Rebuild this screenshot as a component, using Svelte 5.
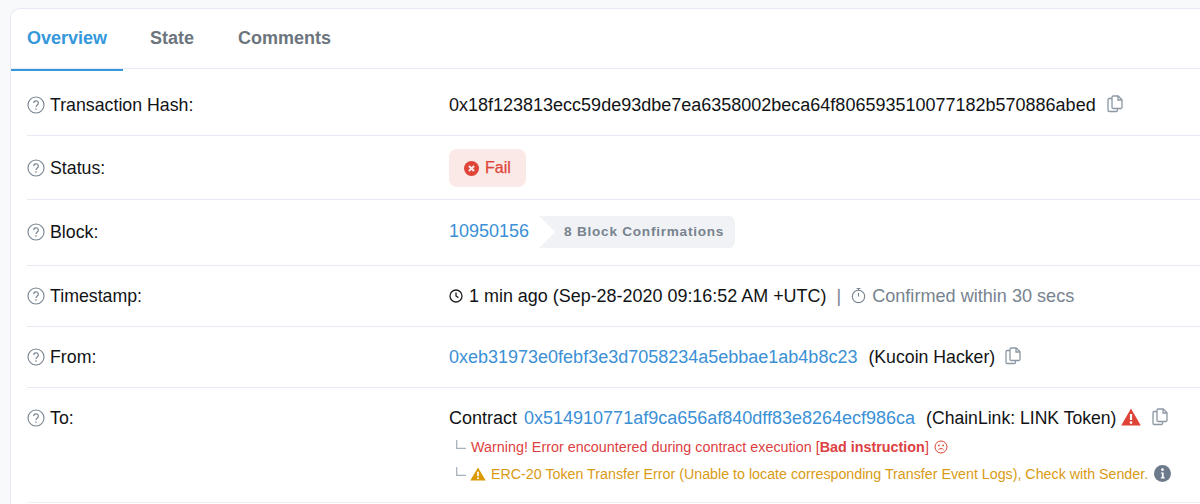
<script>
</script>

{#snippet help()}
  <svg class="help" viewBox="0 0 18 18" width="18" height="18" fill="none" stroke="#77838f">
    <circle cx="9" cy="9" r="8" stroke-width="1.1" />
    <path d="M6.7 7.1a2.3 2.3 0 1 1 3.6 1.9c-.9.6-1.3 1-1.3 2" stroke-width="1.2" />
    <circle cx="9" cy="13" r=".8" fill="#77838f" stroke="none" />
  </svg>
{/snippet}

{#snippet copy()}
  <svg class="copy" viewBox="0 0 16 18" width="16" height="18" fill="none" stroke="#8c98a4" stroke-width="1.3">
    <path d="M5 3.5H2.2a1.2 1.2 0 0 0-1.2 1.2v10.6a1.2 1.2 0 0 0 1.2 1.2h7.1a1.2 1.2 0 0 0 1.2-1.2V13.5" />
    <path d="M5 2.2A1.2 1.2 0 0 1 6.2 1h5l3.8 3.8v7.5a1.2 1.2 0 0 1-1.2 1.2H6.2A1.2 1.2 0 0 1 5 12.3z" />
    <path d="M11 1v4h4" />
  </svg>
{/snippet}

{#snippet elbow()}
  <svg class="elbow" viewBox="0 0 10 10" width="10" height="10" fill="none" stroke="#a9b2bc" stroke-width="1.3">
    <path d="M.7 0v8.3H10" />
  </svg>
{/snippet}

<div class="card">
  <div class="tabs">
    <div class="tab active">Overview</div>
    <div class="tab">State</div>
    <div class="tab">Comments</div>
  </div>

  <div class="rows">
    <div class="row r-hash">
      <div class="label">{@render help()}Transaction Hash:</div>
      <div class="value">
        <span>0x18f123813ecc59de93dbe7ea6358002beca64f806593510077182b570886abed</span>
        {@render copy()}
      </div>
    </div>

    <div class="row r-status">
      <div class="label">{@render help()}Status:</div>
      <div class="value">
        <span class="fail">
          <svg viewBox="0 0 14 14" width="15" height="15">
            <circle cx="7" cy="7" r="7" fill="#de4437" />
            <path d="M4.6 4.6l4.8 4.8M9.4 4.6l-4.8 4.8" stroke="#fbe6e4" stroke-width="2" />
          </svg>
          Fail
        </span>
      </div>
    </div>

    <div class="row r-block">
      <div class="label">{@render help()}Block:</div>
      <div class="value">
        <a href="#block">10950156</a>
        <span class="confirm">8 Block Confirmations</span>
      </div>
    </div>

    <div class="row r-time">
      <div class="label">{@render help()}Timestamp:</div>
      <div class="value">
        <svg class="clock" viewBox="0 0 14 14" width="14" height="14" fill="none" stroke="#1e2022" stroke-width="1.3">
          <circle cx="7" cy="7" r="6" />
          <path d="M7 3.5V7l2.4 1.6" />
        </svg>
        <span class="stamp">1 min ago (Sep-28-2020 09:16:52 AM +UTC)</span>
        <span class="pipe">|</span>
        <svg class="timer" viewBox="0 0 16 18" width="15" height="17" fill="none" stroke="#77838f" stroke-width="1.2">
          <circle cx="8" cy="10" r="6.6" />
          <path d="M8 10V6M6 1.5h4M8 1.5v2" />
        </svg>
        <span class="muted">Confirmed within 30 secs</span>
      </div>
    </div>

    <div class="row r-from">
      <div class="label">{@render help()}From:</div>
      <div class="value">
        <a href="#from">0xeb31973e0febf3e3d7058234a5ebbae1ab4b8c23</a>
        <span class="tag">(Kucoin Hacker)</span>
        {@render copy()}
      </div>
    </div>

    <div class="row r-to">
      <div class="label">{@render help()}To:</div>
      <div class="value stack">
        <div class="line">
          <span>Contract</span>
          <a href="#to">0x514910771af9ca656af840dff83e8264ecf986ca</a>
          <span class="tag">(ChainLink: LINK Token)</span>
          <svg class="alert" viewBox="0 0 20 18" width="20" height="18">
            <path d="M10 .5L19.8 17.5H.2z" fill="#de4437" />
            <path d="M10 6v6" stroke="#fff" stroke-width="2.2" />
            <circle cx="10" cy="14.6" r="1.3" fill="#fff" />
          </svg>
          {@render copy()}
        </div>
        <div class="note red">
          {@render elbow()}
          <span>Warning! Error encountered during contract execution [<b>Bad instruction</b>]</span>
          <svg viewBox="0 0 14 14" width="14" height="14" fill="none" stroke="#de4437" stroke-width="1">
            <circle cx="7" cy="7" r="6" />
            <circle cx="4.9" cy="5.4" r=".9" fill="#de4437" stroke="none" />
            <circle cx="9.1" cy="5.4" r=".9" fill="#de4437" stroke="none" />
            <path d="M4.3 10a3.2 3.2 0 0 1 5.4 0" />
          </svg>
        </div>
        <div class="note amber">
          {@render elbow()}
          <svg viewBox="0 0 17 15" width="16" height="14">
            <path d="M8.5 .5L16.8 14.5H.2z" fill="#db9a04" />
            <path d="M8.5 5v5" stroke="#fff" stroke-width="1.8" />
            <circle cx="8.5" cy="12" r="1.1" fill="#fff" />
          </svg>
          <span>ERC-20 Token Transfer Error (Unable to locate corresponding Transfer Event Logs), Check with Sender.</span>
          <svg class="info" viewBox="0 0 16 16" width="17" height="17">
            <circle cx="8" cy="8" r="8" fill="#6c7a8c" />
            <circle cx="8" cy="4.4" r="1.3" fill="#fff" />
            <path d="M6.5 7h2.6v4.6h1v1.1H6.4v-1.1h1V8.1h-.9z" fill="#fff" />
          </svg>
        </div>
      </div>
    </div>
  </div>
</div>

<style>
  :global(body) {
    margin: 0;
    background: #f8f9fa;
    font-family: "Liberation Sans", Arial, sans-serif;
    color: #111315;
    overflow: hidden;
  }
  .card {
    margin: 8px 0 0 10px;
    background: #fff;
    border: 1px solid #e7eaf3;
    border-right: none;
    border-bottom: none;
    border-radius: 10px 0 0 0;
    height: 496px;
    box-sizing: border-box;
    font-size: 18px;
  }
  .tabs {
    display: flex;
    height: 60px;
    box-sizing: border-box;
    border-bottom: 1px solid #e7eaf3;
  }
  .tab {
    padding: 19px 16px 0;
    margin-right: 12px;
    font-weight: 700;
    font-size: 18px;
    color: #6c757e;
    height: 41px;
  }
  .tab.active {
    color: #3498db;
    border-bottom: 2px solid #3498db;
    margin-bottom: -1px;
    margin-right: 11px;
  }
  .rows {
    padding: 0 0 0 16px;
  }
  .row {
    display: flex;
    border-bottom: 1px solid #e7eaf3;
    box-sizing: border-box;
  }
  .r-hash { height: 67px; padding-top: 26px; }
  .r-status { height: 64px; padding-top: 13px; }
  .r-block { height: 66px; padding-top: 16px; }
  .r-time { height: 61px; padding-top: 20px; }
  .r-from { height: 61px; padding-top: 20px; }
  .r-to { height: 115px; padding-top: 20px; border-bottom-color: #f0f1f4; }
  .label {
    width: 422px;
    flex: none;
    display: flex;
    align-items: flex-start;
    gap: 5px;
    line-height: 20px;
    font-size: 17.75px;
  }
  .r-status .label { padding-top: 9px; }
  .r-block .label { padding-top: 6px; }
  .help {
    margin-top: 1px;
    flex: none;
  }
  .value {
    display: flex;
    align-items: flex-start;
    line-height: 20px;
    white-space: nowrap;
  }
  .value a {
    color: #3b90d6;
    text-decoration: none;
  }
  .copy {
    margin-left: 11px;
    flex: none;
  }
  .fail {
    display: inline-flex;
    align-items: center;
    gap: 6px;
    height: 38px;
    width: 77px;
    padding: 0 15px;
    box-sizing: border-box;
    border-radius: 8px;
    background: #fbe9e7;
    color: #de4437;
    font-size: 16px;
    -webkit-text-stroke: 0.25px #de4437;
  }
  .r-block a { padding-top: 5px; }
  .confirm {
    margin-left: 10px;
    height: 32px;
    line-height: 32px;
    padding: 0 11px 0 25px;
    box-sizing: border-box;
    background: #f1f2f5;
    color: #77838f;
    font-size: 13.6px;
    font-weight: 700;
    letter-spacing: 0.75px;
    border-radius: 0 6px 6px 0;
    clip-path: polygon(0 0, 100% 0, 100% 100%, 0 100%, 16px 50%);
  }
  .clock { margin: 3px 6px 0 0; }
  .stamp { font-size: 17.95px; }
  .pipe { color: #77838f; margin: 0 10px 0 10px; }
  .timer { margin: 1px 6px 0 0; }
  .muted { color: #77838f; font-size: 18.1px; }
  .tag { margin-left: 11px; font-size: 17.7px; }
  .value :global(.tag + .copy) { margin-left: 10px; }
  .stack {
    flex-direction: column;
  }
  .line {
    display: flex;
    align-items: flex-start;
    gap: 5px;
    height: 25px;
  }
  .line a { margin-left: 2px; }
  .line .tag { margin-left: 6px; font-size: 17.6px; }
  .alert { margin-top: 0; flex: none; }
  .line :global(.copy) { margin-left: 6px; }
  .note {
    display: flex;
    align-items: center;
    gap: 5px;
    height: 27px;
  }
  .note .elbow { margin: -4px 0 0 5px; }
  .red { color: #dd3f42; font-size: 14.35px; }
  .red .elbow, .amber .elbow { margin-left: 7px; }
  .amber { color: #d99a14; font-size: 14.25px; }
  .amber svg + svg { margin-left: -1px; }
  .info { margin-left: 1px; }
</style>
